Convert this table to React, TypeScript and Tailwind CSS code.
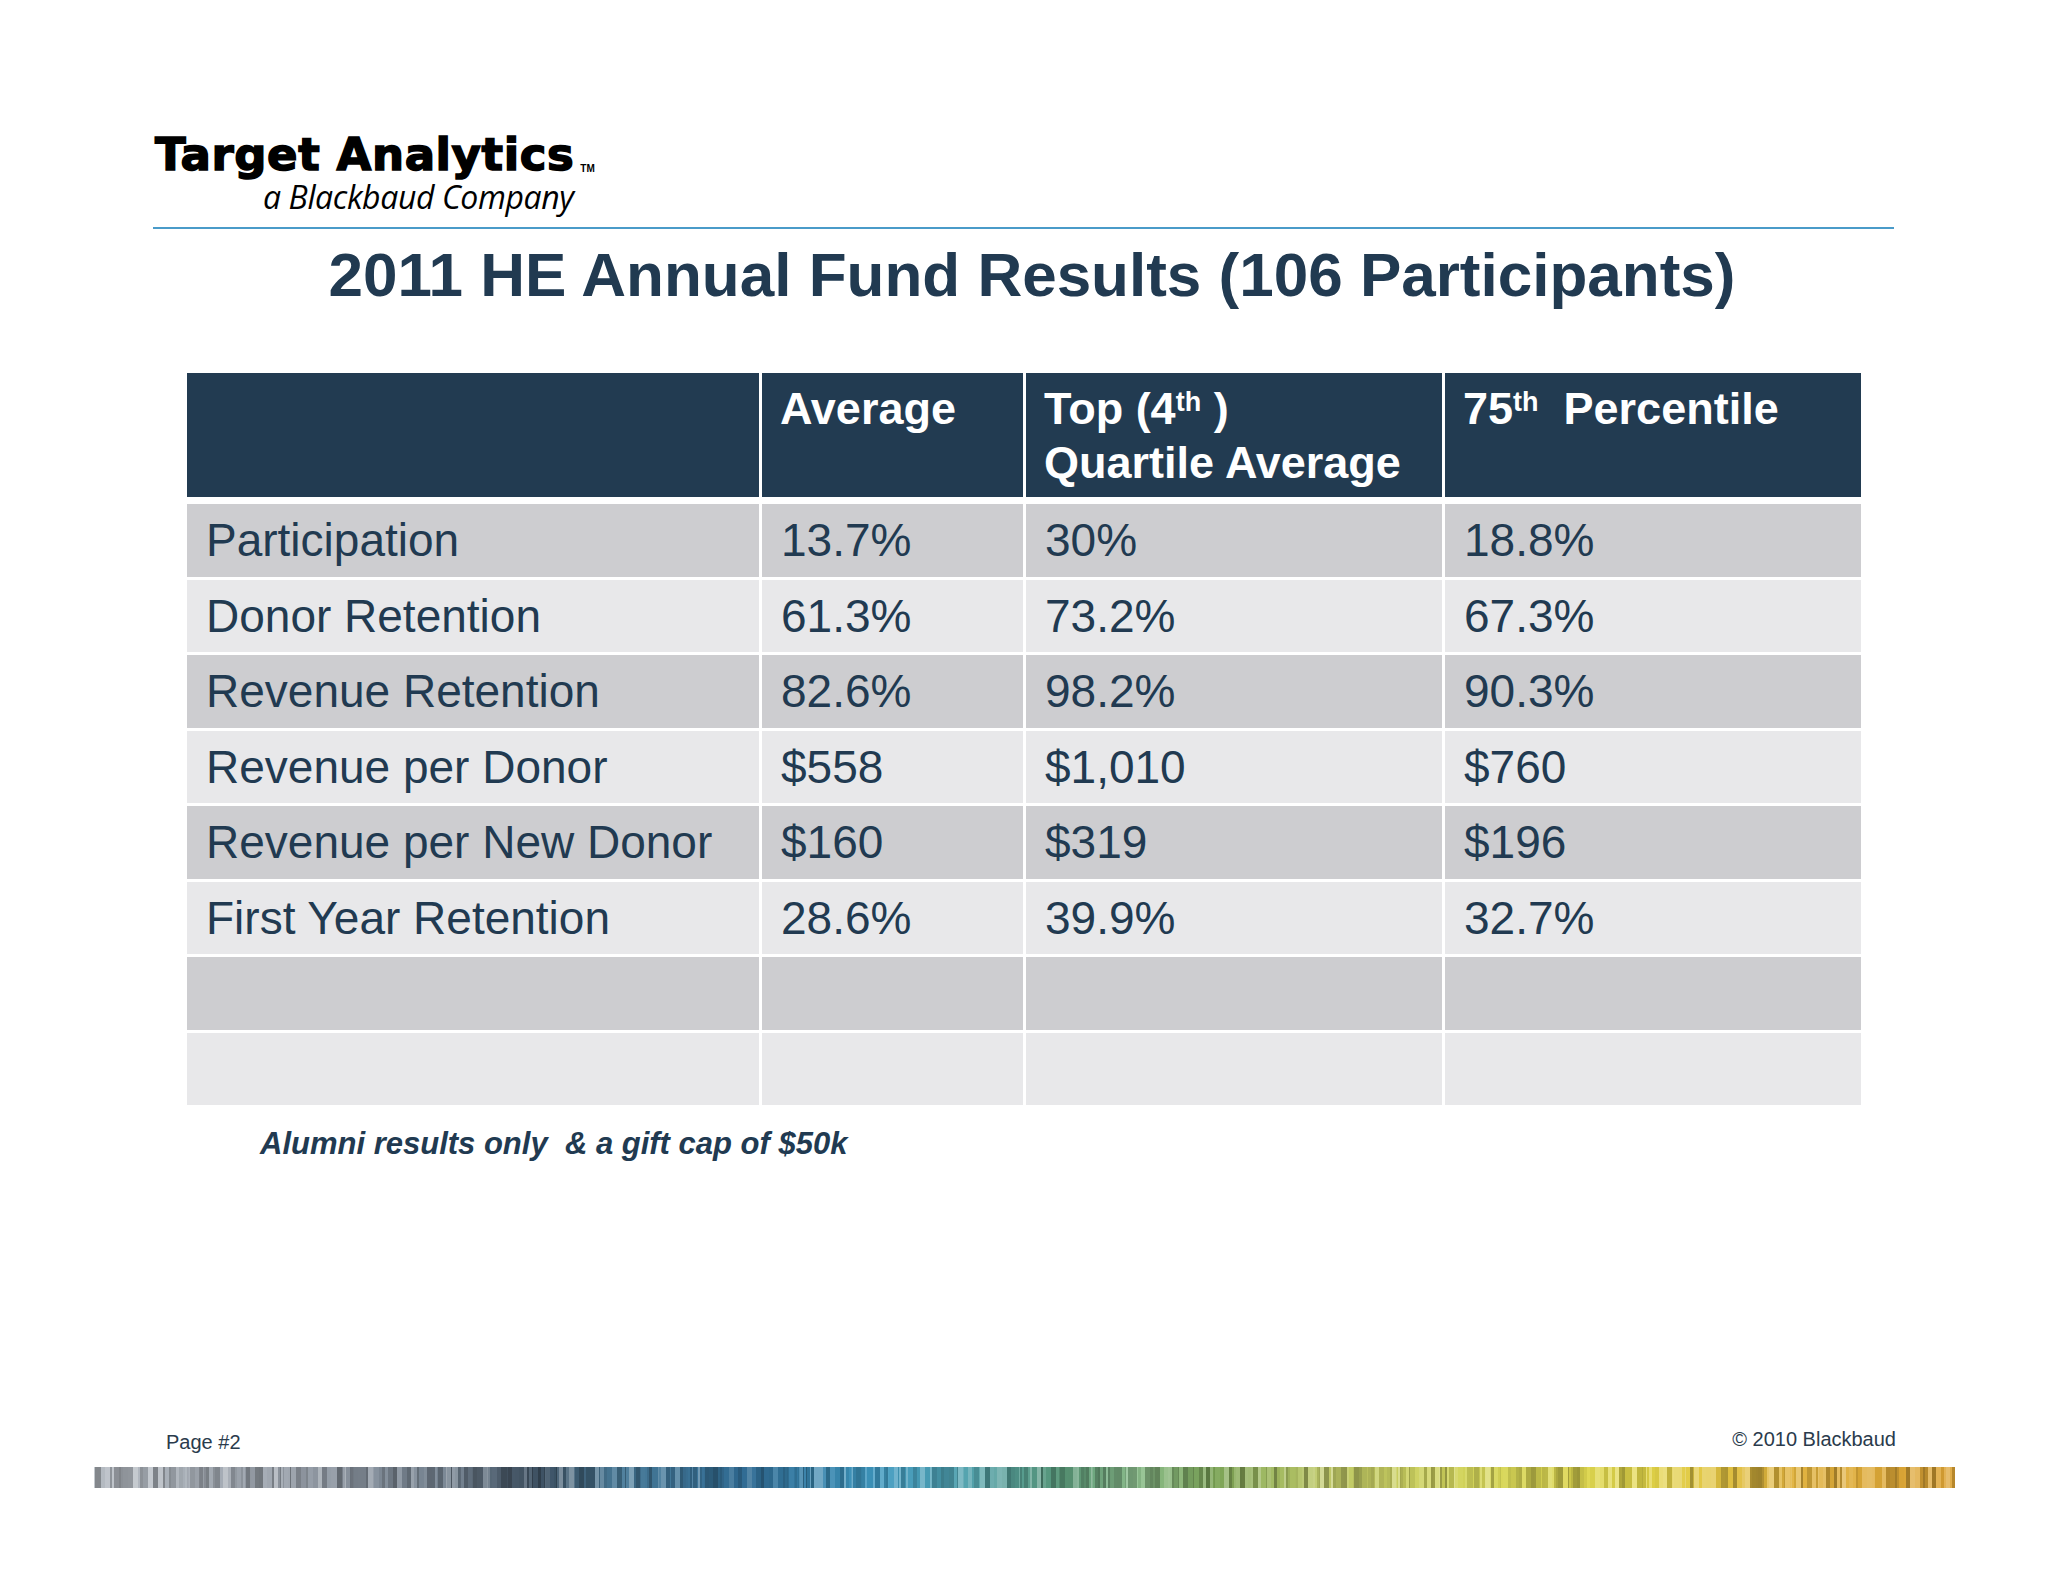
import React from "react";

const HEADERS = [
  { key: "blank", content: null },
  { key: "avg", content: <>Average</> },
  {
    key: "top",
    content: (
      <>
        Top (4<sup className="text-[27px] relative -top-[13px]">th</sup> )
        <br />
        Quartile Average
      </>
    ),
  },
  {
    key: "p75",
    content: (
      <>
        75<sup className="text-[27px] relative -top-[13px]">th</sup>
        {"\u00a0 "}Percentile
      </>
    ),
  },
];

const ROWS = [
  ["Participation", "13.7%", "30%", "18.8%"],
  ["Donor Retention", "61.3%", "73.2%", "67.3%"],
  ["Revenue Retention", "82.6%", "98.2%", "90.3%"],
  ["Revenue per Donor", "$558", "$1,010", "$760"],
  ["Revenue per New Donor", "$160", "$319", "$196"],
  ["First Year Retention", "28.6%", "39.9%", "32.7%"],
  ["", "", "", ""],
  ["", "", "", ""],
];

// colour stops for the footer bar strip, t from left to right
const STOPS: [number, number[]][] = [
  [0, [182, 188, 195]],
  [0.11, [150, 158, 168]],
  [0.19, [112, 126, 140]],
  [0.24, [62, 82, 100]],
  [0.28, [72, 122, 152]],
  [0.35, [48, 108, 148]],
  [0.42, [62, 152, 192]],
  [0.47, [82, 162, 172]],
  [0.52, [88, 150, 118]],
  [0.56, [142, 192, 142]],
  [0.6, [122, 164, 86]],
  [0.66, [192, 202, 104]],
  [0.75, [214, 214, 88]],
  [0.83, [226, 214, 72]],
  [0.91, [224, 178, 60]],
  [1, [220, 162, 52]],
];

const BAR_W = 1861;

const colorAt = (t: number) => {
  let i = 0;
  while (i < STOPS.length - 2 && t > STOPS[i + 1][0]) i++;
  const [t0, c0] = STOPS[i];
  const [t1, c1] = STOPS[i + 1];
  const k = Math.min(1, Math.max(0, (t - t0) / (t1 - t0)));
  return c0.map((v, j) => v + (c1[j] - v) * k);
};

const makeBars = () => {
  let seed = 12345;
  const rand = () => {
    seed = (seed * 16807) % 2147483647;
    return seed / 2147483647;
  };
  const bars: { x: number; w: number; fill: string }[] = [];
  let x = 0;
  while (x < BAR_W) {
    const w = 1 + Math.floor(rand() * 5);
    const base = colorAt(x / BAR_W);
    const f = 0.7 + rand() * 0.5;
    const c = base.map((v) =>
      f > 1 ? Math.round(v + (255 - v) * (f - 1) * 1.6) : Math.round(v * f)
    );
    bars.push({ x, w: Math.min(w, BAR_W - x), fill: `rgb(${c[0]},${c[1]},${c[2]})` });
    x += w;
  }
  return bars;
};

const BARS = makeBars();

const BarStrip = () => (
  <svg width={BAR_W} height={21} viewBox={`0 0 ${BAR_W} 21`} shapeRendering="crispEdges">
    {BARS.map((b) => (
      <rect key={b.x} x={b.x} y={0} width={b.w} height={21} fill={b.fill} />
    ))}
  </svg>
);

const COLS = "grid grid-cols-[572px_261px_416px_416px] gap-x-[3px]";

export default function App() {
  return (
    <div className="w-[2048px] h-[1582px] bg-white flex flex-col font-['Liberation_Sans',Arial,sans-serif] text-[#213a51]">
      {/* logo */}
      <div className="pl-[155px] pt-[133px] flex flex-col">
        <div className="flex items-end h-[43px]">
          <span className="font-['DejaVu_Sans',sans-serif] font-bold text-[45px] leading-[43px] text-black tracking-[0.6px] [-webkit-text-stroke:1.5px_black]">
            Target Analytics
          </span>
          <span className="text-[10px] leading-[10px] font-bold text-black ml-[6px] mb-[2px]">TM</span>
        </div>
        <div className="pl-[108px] mt-[5px] font-['Open_Sans',sans-serif] italic text-[32px] leading-[32px] tracking-[-0.4px] text-black">
          a Blackbaud Company
        </div>
      </div>

      <div className="ml-[153px] w-[1741px] h-[2px] mt-[14px] bg-[#4a9bc9]" />

      <h1 className="mt-[15px] text-center pl-[16px] font-bold text-[62px] leading-[62px]">
        2011 HE Annual Fund Results (106 Participants)
      </h1>

      {/* table */}
      <div className="ml-[187px] mt-[67px] w-[1674px] flex flex-col">
        <div className={`${COLS} h-[124px] mb-[7px]`}>
          {HEADERS.map((h) => (
            <div
              key={h.key}
              className="bg-[#223b51] text-white font-bold text-[45px] leading-[54px] pt-[9px] px-[18px]"
            >
              {h.content}
            </div>
          ))}
        </div>
        <div className="flex flex-col gap-y-[3px]">
          {ROWS.map((row, i) => (
            <div key={i} className={`${COLS} h-[72.5px]`}>
              {row.map((cell, j) => (
                <div
                  key={j}
                  className={`${i % 2 === 0 ? "bg-[#cdcdd0]" : "bg-[#e8e8ea]"} flex items-center pl-[19px] text-[46px] leading-[46px]`}
                >
                  {cell}
                </div>
              ))}
            </div>
          ))}
        </div>
      </div>

      <p className="ml-[260px] mt-[23px] font-bold italic text-[31px] leading-[31px] whitespace-pre">
        Alumni results only  &amp; a gift cap of $50k
      </p>

      {/* footer */}
      <div className="mt-[270px] flex justify-between pl-[166px] pr-[152px] text-[20px] leading-[20px] text-[#2a3b4c]">
        <span className="mt-[3px]">Page #2</span>
        <span>© 2010 Blackbaud</span>
      </div>
      <div className="ml-[94px] mt-[15px] h-[21px]">
        <BarStrip />
      </div>
    </div>
  );
}
